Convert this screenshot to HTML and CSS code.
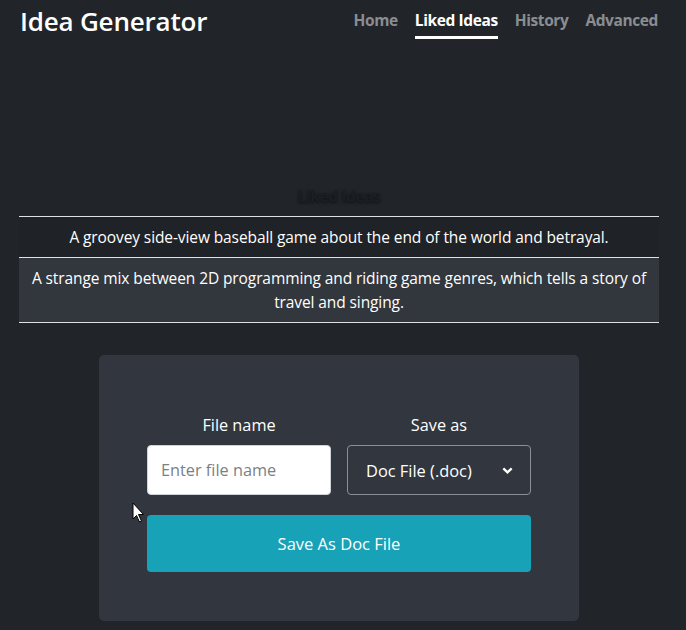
FILE: index.html
```html
<!DOCTYPE html>
<html>
<head>
<meta charset="utf-8">
<link rel="stylesheet" href="styles.css">
</head>
<body>
<header class="topbar">
  <div class="brand">Idea Generator</div>
  <nav class="nav">
    <a class="nav-link">Home</a>
    <a class="nav-link active">Liked Ideas</a>
    <a class="nav-link">History</a>
    <a class="nav-link">Advanced</a>
  </nav>
</header>
<main class="content">
  <h2 class="section-title">Liked Ideas</h2>
  <div class="ideas">
    <div class="idea idea-dark">A groovey side-view baseball game about the end of the world and betrayal.</div>
    <div class="idea idea-light">A strange mix between 2D programming and riding game genres, which tells a story of travel and singing.</div>
  </div>
  <section class="card">
    <div class="fields">
      <div class="field">
        <label class="label">File name</label>
        <div class="input">Enter file name</div>
      </div>
      <div class="field">
        <label class="label">Save as</label>
        <div class="select">
          <span>Doc File (.doc)</span>
          <svg class="chev" width="11" height="7" viewBox="0 0 11 7"><path d="M1.3 1.3 L5.5 5.3 L9.7 1.3" fill="none" stroke="#fff" stroke-width="2.3"/></svg>
        </div>
      </div>
    </div>
    <button class="save">Save As Doc File</button>
    <svg class="cursor" width="14" height="22" viewBox="0 0 14 22"><path d="M1 1 L1 17 L4.5 13.5 L7.5 20 L9.5 19 L6.5 12.5 L11.5 12.5 Z" fill="#fff" stroke="#000" stroke-width="1"/></svg>
  </section>
</main>
</body>
</html>
```
FILE: styles.css
```css
* { box-sizing: border-box; }
html, body { margin: 0; padding: 0; }
body {
  background: #212529;
  color: #fff;
  font-family: "Open Sans", "Noto Sans", sans-serif;
  width: 686px;
  height: 630px;
  overflow: hidden;
}
.topbar {
  display: flex;
  align-items: flex-start;
  justify-content: space-between;
  padding: 4px 28px 0 20px;
  height: 45px;
}
.brand {
  font-size: 26px;
  line-height: 34px;
  font-weight: 600;
  letter-spacing: -0.2px;
}
.nav { display: flex; gap: 17px; padding-top: 5px; }
.nav-link {
  font-size: 15.5px;
  line-height: 22px;
  font-weight: 700;
  color: #8a8d91;
  letter-spacing: -0.4px;
  padding-bottom: 5px;
  border-bottom: 3px solid transparent;
}
.nav-link.active { color: #fff; border-bottom-color: #fff; }
.content {
  width: 640px;
  margin-left: 19px;
  position: relative;
}
.section-title {
  margin: 139px 0 0;
  height: 32px;
  font-size: 15.5px;
  font-weight: 700;
  text-align: center;
  letter-spacing: -0.4px;
  color: #1c1f22;
  text-shadow: 0 1px 3px rgba(0,0,0,0.6);
  line-height: 24px;
}
.ideas { border-top: 1px solid #dee2e6; }
.idea {
  font-size: 15.5px;
  line-height: 24px;
  padding: 8px 12px;
  text-align: center;
  border-bottom: 1px solid #dee2e6;
  letter-spacing: -0.1px;
}
.idea-dark { background: #1f2226; }
.idea-light { background: #32363d; }
.card {
  width: 480px;
  margin: 32px 0 0 80px;
  background: #32363e;
  border-radius: 5px;
  padding: 58px 48px 49px;
  position: relative;
}
.fields { display: flex; gap: 16px; }
.field { flex: 1; display: flex; flex-direction: column; align-items: center; }
.label { font-size: 16.3px; line-height: 24px; margin-bottom: 8px; }
.input {
  width: 100%;
  height: 50px;
  background: #fff;
  border: 1px solid #ced4da;
  border-radius: 4px;
  color: #7b8087;
  font-size: 16.3px;
  padding: 0 13px;
  display: flex;
  align-items: center;
}
.select {
  width: 100%;
  height: 50px;
  border: 1px solid #8c9096;
  border-radius: 4px;
  font-size: 16.4px;
  padding: 0 17px 0 18px;
  display: flex;
  align-items: center;
  justify-content: space-between;
}
.save {
  display: block;
  width: 100%;
  height: 57px;
  margin-top: 20px;
  background: #17a2b8;
  border: none;
  border-radius: 4px;
  color: #fff;
  font-family: inherit;
  font-size: 16.5px;
}
.cursor { position: absolute; left: 33px; top: 147px; }
```
